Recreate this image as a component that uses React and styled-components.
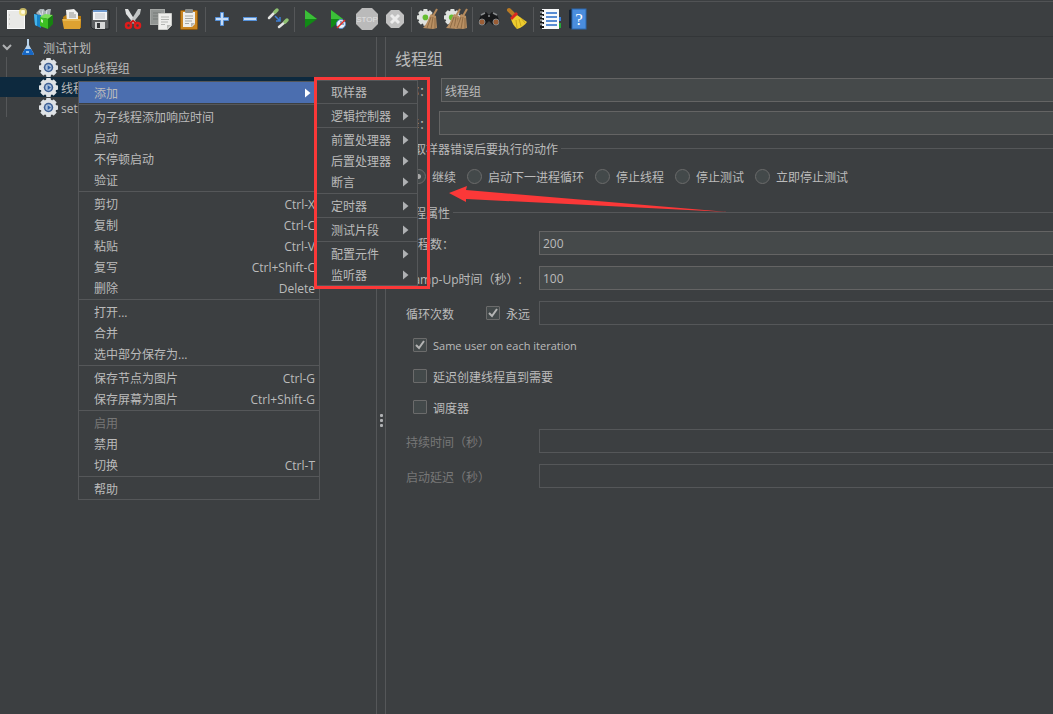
import styled, { createGlobalStyle } from "styled-components";

const GlobalStyle = createGlobalStyle`
    * {
        box-sizing: border-box;
    }
    body {
        margin: 0;
        background-color: #3c3f41;
        color: #bbbbbb;
        font-family: "Open Sans", "Noto Sans CJK SC", sans-serif;
        font-size: 12px;
        line-height: 20px;
    }
    button, input {
        font: inherit;
        color: inherit;
    }
`;

const Window = styled.div`
    position: relative;
    display: flex;
    flex-direction: column;
    min-height: 100vh;
    overflow: hidden;
`;

const Text = styled.span`
    padding-top: ${({ $menu }) => ($menu ? 2 : 4)}px;
    font-size: ${({ $small }) => ($small ? 11 : 12)}px;
    white-space: nowrap;
`;

const StyledToolbar = styled.div`
    display: flex;
    align-items: center;
    height: 36px;
    margin-top: 1px;
    padding-left: 2px;
    border-top: 1px solid #515355;
    border-bottom: 1px solid #333638;
`;

const ToolButton = styled.button`
    display: flex;
    align-items: center;
    justify-content: center;
    width: 28px;
    height: 28px;
    padding: 0;
    border: none;
    background: transparent;
    svg {
        flex: none;
    }
`;

const ToolDivider = styled.div`
    width: 1px;
    height: 25px;
    margin: 0 2px;
    background-color: #555759;
`;

const Body = styled.div`
    display: flex;
    flex: 1;
`;

const Sidebar = styled.div`
    width: 377px;
    flex: none;
    border-right: 1px solid #555759;
`;

const Splitter = styled.div`
    display: flex;
    flex-direction: column;
    align-items: center;
    justify-content: center;
    gap: 2px;
    width: 9px;
    flex: none;
    padding-top: 90px;
    border-right: 1px solid #555759;
    span {
        width: 3px;
        height: 3px;
        border-radius: 1px;
        background-color: #afb1b3;
    }
`;

const Tree = styled.ul`
    list-style: none;
    margin: 0;
    padding: 0;
`;

const Branch = styled(Tree)`
    background: linear-gradient(#555759, #555759) 6px 0 / 1px 100% no-repeat;
`;

const TreeRow = styled.div`
    display: flex;
    align-items: center;
    height: 20px;
    padding-left: ${({ $level }) => ($level ? 39 : 1)}px;
    gap: ${({ $level }) => ($level ? 3 : 9)}px;
    background-color: ${({ $selected }) => ($selected ? "#0d293e" : "transparent")};
    svg {
        flex: none;
    }
`;

const Panel = styled.main`
    flex: 1;
    min-width: 0;
    padding: 10px 0 0 9px;
`;

const Title = styled.h1`
    margin: 0 0 7px;
    font-size: 16px;
    font-weight: 400;
    line-height: 24px;
`;

const Field = styled.div`
    display: flex;
    align-items: center;
    height: 24px;
    margin-bottom: ${({ $gap }) => $gap || 11}px;
    color: ${({ $disabled }) => ($disabled ? "#777777" : "inherit")};
`;

const FieldLabel = styled.label`
    display: flex;
    flex: none;
    width: ${({ $width }) => $width || 133}px;
`;

const TextInput = styled.input`
    flex: 1;
    min-width: 0;
    height: 24px;
    padding: ${({ $numeric }) => ($numeric ? 0 : 2)}px 3px 0;
    border: 1px solid #646464;
    border-right: none;
    background-color: #45494a;
    outline: none;
    &:disabled {
        border-color: #555759;
        background-color: #3c3f41;
    }
`;

const Group = styled.fieldset`
    min-width: 0;
    margin: 0;
    padding: 0 0 0 11px;
    border: none;
`;

const Legend = styled.legend`
    display: flex;
    align-items: center;
    gap: 3px;
    width: calc(100% + 4px);
    height: 20px;
    margin-left: -4px;
    padding: 0;
    &::after {
        content: "";
        flex: 1;
        height: 1px;
        background-color: #555759;
    }
`;

const RadioRow = styled.div`
    display: flex;
    flex-wrap: wrap;
    gap: 11px;
    padding: 8px 0 16px 5px;
`;

const ThreadFields = styled.div`
    padding-top: 9px;
`;

const Choice = styled.label`
    display: flex;
    align-items: center;
    gap: 6px;
    height: 20px;
`;

const Radio = styled.input`
    appearance: none;
    width: 15px;
    height: 15px;
    margin: 0;
    border: 1px solid #6b6b6b;
    border-radius: 50%;
    background-color: #43494a;
    &:checked {
        background-image: radial-gradient(circle, #a8a8a8 2px, transparent 3px);
    }
`;

const Check = styled.span`
    display: grid;
    width: 14px;
    height: 14px;
    flex: none;
    input {
        grid-area: 1 / 1;
        appearance: none;
        width: 14px;
        height: 14px;
        margin: 0;
        border: 1px solid #6b6b6b;
        border-radius: 1px;
        background-color: #43494a;
    }
    svg {
        grid-area: 1 / 1;
        pointer-events: none;
        visibility: hidden;
    }
    input:checked + svg {
        visibility: visible;
    }
`;

const LoopChoice = styled(Choice)`
    width: 53px;
    flex: none;
`;

const CheckList = styled.div`
    display: flex;
    flex-direction: column;
    gap: 11px;
    padding: 0 0 12px 7px;
`;

const Menu = styled.ul`
    position: absolute;
    left: ${({ $x }) => $x}px;
    top: ${({ $y }) => $y}px;
    width: ${({ $width }) => $width}px;
    margin: 0;
    padding: 0;
    list-style: none;
    border: 1px solid #555759;
    background-color: #3c3f41;
    color: #bbbbbb;
    z-index: 1;
`;

const MenuItem = styled.li`
    position: relative;
`;

const MenuButton = styled.button`
    display: flex;
    align-items: center;
    justify-content: space-between;
    width: 100%;
    height: 21px;
    padding: 0 4px 0 15px;
    border: none;
    background-color: ${({ $active }) => ($active ? "#4b6eaf" : "transparent")};
    text-align: left;
    &:disabled {
        color: #777777;
    }
    svg {
        margin-right: 4px;
    }
`;

const MenuDivider = styled.li`
    height: 1px;
    margin: 1px 0;
    background-color: #555759;
`;

const Highlight = styled.div`
    position: absolute;
    left: 314px;
    top: 77px;
    width: 116px;
    height: 212px;
    border: 3px solid #fb3838;
    pointer-events: none;
    z-index: 2;
`;

const Pointer = styled.svg`
    position: absolute;
    left: 448px;
    top: 184px;
    pointer-events: none;
`;

function Icon({ children, size = 24 }) {
    return (
        <svg width={size} height={size} viewBox="0 0 24 24" aria-hidden="true">
            {children}
        </svg>
    );
}

const NewIcon = () => (
    <Icon>
        <rect x="3.5" y="3.5" width="17" height="18" fill="#e9e9e7" stroke="#fbfbfb" />
        <path d="M5 8h1M5 12h1M5 17h1" stroke="#b5b5b1" />
        <circle cx="19" cy="5" r="4" fill="#f0dd72" opacity=".75" />
        <circle cx="19" cy="5" r="2" fill="#fffbe0" />
    </Icon>
);

const TemplatesIcon = () => (
    <Icon>
        <path d="M4 6l4-4h4l1 2 3-2h3l-1 6-8 4z" fill="#a9b2b6" />
        <path d="M7 4l2 4M11 3l-1 5M15 3l-1 5" stroke="#d9dfe1" />
        <path d="M2 7l7 1v13l-6-3z" fill="#1583c8" />
        <path d="M2 7l3 1v11l-2-1z" fill="#46b4ea" />
        <path d="M8 10l5-3 8 1-5 4z" fill="#7be05a" />
        <path d="M8 10l8 2v10l-8-3z" fill="#3cc023" />
        <path d="M21 8l-5 4v10l5-5z" fill="#178210" />
        <path d="M9 12l2 1v3l-2-1z" fill="#c8f5b8" />
    </Icon>
);

const OpenIcon = () => (
    <Icon>
        <path d="M3 10l3-2h3l12 1v12H4z" fill="#b97c10" />
        <path d="M6 3l8-1 4 4v9H7z" fill="#f1f1ef" />
        <path d="M9 6h5M9 8h7M9 10h7" stroke="#92928e" />
        <path d="M2 12h19l-1 10H4z" fill="#dda231" />
        <path d="M3 13h17" stroke="#f3cd74" />
    </Icon>
);

const SaveIcon = () => (
    <Icon>
        <path d="M3 3h18v19H5l-2-2z" fill="#5b5e60" stroke="#25282a" />
        <rect x="5" y="3" width="14" height="10" fill="#f3f5f8" />
        <path d="M5 3h14v2H5z" fill="#6e9ad0" />
        <path d="M7 7h10M7 9h10M7 11h10" stroke="#bcc2ca" />
        <rect x="7" y="15" width="10" height="7" fill="#d5d7d7" />
        <rect x="9" y="16" width="3" height="5" fill="#35383a" />
    </Icon>
);

const CutIcon = () => (
    <Icon>
        <path d="M4 2l3 0 8 13-2 2L5 7z" fill="#dfe1e1" />
        <path d="M20 2l-3 0L9 15l2 2 8-10z" fill="#c2c5c5" />
        <circle cx="7.5" cy="18.5" r="2.5" fill="none" stroke="#df1b1b" strokeWidth="2.5" />
        <circle cx="16.5" cy="18.5" r="2.5" fill="none" stroke="#df1b1b" strokeWidth="2.5" />
        <path d="M9 16l3-2 3 2" fill="none" stroke="#c81414" strokeWidth="2" />
    </Icon>
);

const CopyIcon = () => (
    <Icon>
        <rect x="1.5" y="2.5" width="14" height="15" fill="#929694" stroke="#a5a8a6" />
        <path d="M4 6h8M4 9h6M4 12h6" stroke="#777b79" />
        <path d="M9.5 6.5h13v12l-4 4h-9z" fill="#eeeeec" stroke="#c9cac7" />
        <path d="M12 10h8M12 12.5h8M12 15h7M12 17.5h4" stroke="#b3b5b2" />
        <path d="M22 18h-4v4z" fill="#b6b8b5" />
    </Icon>
);

const PasteIcon = () => (
    <Icon>
        <rect x="3.5" y="3.5" width="17" height="19" rx="1" fill="#c98420" stroke="#8b570d" />
        <path d="M6 5h12v12l-3 3H6z" fill="#eeeeec" />
        <rect x="8" y="2" width="8" height="4" rx="1" fill="#8b8e8c" />
        <path d="M8 9h8M8 11.5h8M8 14h7M8 16.5h4" stroke="#a5a7a4" />
        <path d="M18 16h-4v4z" fill="#b3b5b2" />
    </Icon>
);

const PlusIcon = () => (
    <Icon>
        <path d="M10.5 5.5h3v5h5v3h-5v5h-3v-5h-5v-3h5z" fill="#c5dcf7" stroke="#5590d8" />
    </Icon>
);

const MinusIcon = () => (
    <Icon>
        <rect x="5.5" y="10.5" width="13" height="3" fill="#c5dcf7" stroke="#5590d8" />
    </Icon>
);

const ToggleIcon = () => (
    <Icon>
        <path d="M3 11l6-6" stroke="#e3e5e1" strokeWidth="2.5" strokeLinecap="round" />
        <path d="M9 5l2-2" stroke="#8fc272" strokeWidth="3.5" strokeLinecap="round" />
        <path d="M13 20l6-5" stroke="#e3e5e1" strokeWidth="2.5" strokeLinecap="round" />
        <path d="M19 15l2-2" stroke="#8fc272" strokeWidth="3.5" strokeLinecap="round" />
        <path d="M9 9l5 5M14 10v4h-4" fill="none" stroke="#3d7fd5" strokeWidth="1.5" />
    </Icon>
);

const StartIcon = () => (
    <Icon>
        <path d="M6 3l12 9-12 9z" fill="#118a15" />
        <path d="M6 3l12 9H6z" fill="#3bbf38" />
    </Icon>
);

const StartNoPauseIcon = () => (
    <Icon>
        <path d="M4 3l12 9-12 9z" fill="#118a15" />
        <path d="M4 3l12 9H4z" fill="#3bbf38" />
        <circle cx="14" cy="17" r="4.5" fill="#e9f0fa" stroke="#5c8dc8" />
        <path d="M14 14v3h3" fill="none" stroke="#345d94" />
        <path d="M10 21l8-8" stroke="#e42b1f" strokeWidth="1.5" />
    </Icon>
);

const StopIcon = () => (
    <Icon>
        <path d="M7 1h10l6 6v10l-6 6H7l-6-6V7z" fill="#bababa" />
        <text x="12" y="15" textAnchor="middle" fontSize="8" fontFamily="Liberation Sans" fill="#e2e2e2">STOP</text>
    </Icon>
);

const ShutdownIcon = () => (
    <Icon>
        <path d="M8 3h8l5 5v8l-5 5H8l-5-5V8z" fill="#c1c1c1" />
        <path d="M8 8l8 8M16 8l-8 8" stroke="#ececec" strokeWidth="3" />
    </Icon>
);

function Cog({ color }) {
    return (
        <g fill={color}>
            <circle cx="12" cy="12" r="10" />
            {[0, 45, 90, 135].map((angle) => (
                <rect key={angle} x="9" y="0" width="6" height="24" rx="1" transform={`rotate(${angle} 12 12)`} />
            ))}
        </g>
    );
}

function Broom() {
    return (
        <g>
            <path d="M21 2l-4 7" stroke="#b58a5c" strokeWidth="2" />
            <path d="M15 7l5 2 1 12-4 1-10-1c4-4 5-9 8-14z" fill="#b88f63" />
            <path d="M15 10l-4 11M17 10l-2 12M19 11v10" stroke="#8f6b45" />
        </g>
    );
}

const ClearIcon = () => (
    <Icon>
        <g transform="translate(1 2) scale(.7)">
            <Cog color="#dfe2df" />
            <circle cx="12" cy="12" r="4" fill="#65bd30" />
        </g>
        <Broom />
    </Icon>
);

const ClearAllIcon = () => (
    <Icon>
        <g transform="translate(0 2) scale(.7)">
            <Cog color="#dfe2df" />
            <circle cx="11" cy="12" r="4" fill="#65bd30" />
        </g>
        <g transform="translate(-5 0)"><Broom /></g>
        <g transform="translate(2 0)"><Broom /></g>
    </Icon>
);

const SearchIcon = () => (
    <Icon>
        <path d="M4 8l5-3 3 3 3-3 5 3 3 7-3 3h-4l-4-4-4 4H4l-3-3z" fill="#171819" />
        <path d="M4 8l4-2M20 8l-4-2M11 9h2" stroke="#888b8d" strokeWidth="1.5" />
        <circle cx="5" cy="15" r="3" fill="#9b5d35" stroke="#828587" />
        <circle cx="19" cy="15" r="3" fill="#9b5d35" stroke="#828587" />
    </Icon>
);

const ResetIcon = () => (
    <Icon>
        <path d="M4 3l5 5" stroke="#b97a24" strokeWidth="4" strokeLinecap="round" />
        <path d="M12 8l10 7c-2 3-6 6-10 7C9 19 7 16 6 12z" fill="#edcc2e" />
        <path d="M11 13l1 8M14 12l2 7M16 11l4 5" stroke="#c9a51c" />
        <path d="M11 5l2 2-6 6-2-2z" fill="#d92720" />
    </Icon>
);

const FunctionIcon = () => (
    <Icon>
        <path d="M20 10h3v4h-3z" fill="#3b80dc" />
        <path d="M20 16h3v5h-3z" fill="#25a838" />
        <rect x="4" y="2" width="17" height="20" fill="#f8f9fa" />
        <path d="M8 6h11M8 10h11M8 14h11M8 18h11" stroke="#2468c5" strokeWidth="1.5" />
        <path d="M2 4h4M2 8h4M2 12h4M2 16h4M2 20h4" stroke="#171819" strokeWidth="2" />
        <path d="M2 5h3M2 9h3M2 13h3M2 17h3" stroke="#d7d9da" />
    </Icon>
);

const HelpIcon = () => (
    <Icon>
        <path d="M3 3l3-1v20l-3-1z" fill="#14202e" />
        <rect x="6" y="2" width="14" height="20" fill="#4a8ddd" stroke="#2d68ae" />
        <text x="13" y="18" textAnchor="middle" fontSize="17" fontFamily="Liberation Serif" fill="#ffffff">?</text>
    </Icon>
);

const GearIcon = () => (
    <Icon size={19}>
        <Cog color="#dfe3e6" />
        <circle cx="12" cy="12" r="6" fill="#3d5f94" />
        <circle cx="12" cy="12" r="4" fill="#a9c0dc" />
        <path d="M11 9l4 3-4 3z" fill="#2f5fa3" />
    </Icon>
);

const FlaskIcon = () => (
    <svg width="12" height="18" viewBox="0 0 12 18" aria-hidden="true">
        <path d="M5 1h2v6l5 9-1 1H1l-1-1 5-9z" fill="#b9d3ea" />
        <path d="M3 11h6l3 5-1 1H1l-1-1z" fill="#1767c4" />
        <path d="M4 13h3v2H4z" fill="#8fc3f5" />
    </svg>
);

const ArrowIcon = ({ color }) => (
    <svg width="6" height="10" viewBox="0 0 6 10" aria-hidden="true">
        <path d="M0 0.5L5.5 5L0 9.5z" fill={color} />
    </svg>
);

const tools = [
    [["新建", NewIcon], ["模板", TemplatesIcon], ["打开", OpenIcon], ["保存", SaveIcon]],
    [["剪切", CutIcon], ["复制", CopyIcon], ["粘贴", PasteIcon]],
    [["展开", PlusIcon], ["折叠", MinusIcon], ["切换", ToggleIcon]],
    [["启动", StartIcon], ["不停顿启动", StartNoPauseIcon], ["停止", StopIcon], ["关闭", ShutdownIcon]],
    [["清除", ClearIcon], ["清除全部", ClearAllIcon]],
    [["搜索", SearchIcon], ["重置搜索", ResetIcon]],
    [["函数助手", FunctionIcon], ["帮助", HelpIcon]],
];

const menu = [
    [{ label: "添加", sub: true }],
    [{ label: "为子线程添加响应时间" }, { label: "启动" }, { label: "不停顿启动" }, { label: "验证" }],
    [
        { label: "剪切", keys: "Ctrl-X" },
        { label: "复制", keys: "Ctrl-C" },
        { label: "粘贴", keys: "Ctrl-V" },
        { label: "复写", keys: "Ctrl+Shift-C" },
        { label: "删除", keys: "Delete" },
    ],
    [{ label: "打开..." }, { label: "合并" }, { label: "选中部分保存为..." }],
    [{ label: "保存节点为图片", keys: "Ctrl-G" }, { label: "保存屏幕为图片", keys: "Ctrl+Shift-G" }],
    [{ label: "启用", disabled: true }, { label: "禁用" }, { label: "切换", keys: "Ctrl-T" }],
    [{ label: "帮助" }],
];

const addMenu = [
    ["取样器"],
    ["逻辑控制器"],
    ["前置处理器", "后置处理器", "断言"],
    ["定时器"],
    ["测试片段"],
    ["配置元件", "监听器"],
];

const errorActions = ["继续", "启动下一进程循环", "停止线程", "停止测试", "立即停止测试"];

function Toolbar() {
    return (
        <StyledToolbar>
            {tools.flatMap((group, i) => [
                i > 0 && <ToolDivider key={i} />,
                ...group.map(([name, Glyph]) => (
                    <ToolButton key={i + name} type="button" aria-label={name}>
                        <Glyph />
                    </ToolButton>
                )),
            ])}
        </StyledToolbar>
    );
}

function TestTree() {
    return (
        <Tree>
            <li>
                <TreeRow>
                    <svg width="12" height="12" viewBox="0 0 12 12" aria-hidden="true">
                        <path d="M2 4l4 4 4-4" fill="none" stroke="#afb1b3" strokeWidth="2" />
                    </svg>
                    <FlaskIcon />
                    <Text>测试计划</Text>
                </TreeRow>
                <Branch>
                    <li><TreeRow $level={1}><GearIcon /><Text>setUp线程组</Text></TreeRow></li>
                    <li><TreeRow $level={1} $selected><GearIcon /><Text>线程组</Text></TreeRow></li>
                    <li><TreeRow $level={1}><GearIcon /><Text>setUp线程组</Text></TreeRow></li>
                </Branch>
            </li>
        </Tree>
    );
}

function Checkbox(props) {
    return (
        <Check>
            <input type="checkbox" {...props} />
            <svg width="14" height="14" viewBox="0 0 14 14" aria-hidden="true">
                <path d="M3 7l3 3 5-7" fill="none" stroke="#b4b4b4" strokeWidth="2" />
            </svg>
        </Check>
    );
}

function ThreadGroup() {
    return (
        <Panel>
            <Title>线程组</Title>
            <Field $gap={9}>
                <FieldLabel htmlFor="name" $width={46}><Text>名称：</Text></FieldLabel>
                <TextInput id="name" defaultValue="线程组" />
            </Field>
            <Field $gap={3}>
                <FieldLabel htmlFor="comment" $width={44}><Text>注释：</Text></FieldLabel>
                <TextInput id="comment" />
            </Field>
            <Group>
                <Legend><Text>在取样器错误后要执行的动作</Text></Legend>
                <RadioRow>
                    {errorActions.map((action, i) => (
                        <Choice key={action}>
                            <Radio type="radio" name="action" defaultChecked={i === 0} />
                            <Text>{action}</Text>
                        </Choice>
                    ))}
                </RadioRow>
            </Group>
            <Group>
                <Legend><Text>线程属性</Text></Legend>
                <ThreadFields>
                    <Field>
                        <FieldLabel htmlFor="threads"><Text>线程数：</Text></FieldLabel>
                        <TextInput id="threads" $numeric defaultValue="200" />
                    </Field>
                    <Field>
                        <FieldLabel htmlFor="ramp"><Text>Ramp-Up时间（秒）:</Text></FieldLabel>
                        <TextInput id="ramp" $numeric defaultValue="100" />
                    </Field>
                    <Field $gap={10}>
                        <FieldLabel htmlFor="loops" $width={80}><Text>循环次数</Text></FieldLabel>
                        <LoopChoice>
                            <Checkbox defaultChecked />
                            <Text>永远</Text>
                        </LoopChoice>
                        <TextInput id="loops" disabled />
                    </Field>
                </ThreadFields>
                <CheckList>
                    <Choice><Checkbox defaultChecked /><Text $menu $small>Same user on each iteration</Text></Choice>
                    <Choice><Checkbox /><Text>延迟创建线程直到需要</Text></Choice>
                    <Choice><Checkbox /><Text>调度器</Text></Choice>
                </CheckList>
                <Field $disabled>
                    <FieldLabel htmlFor="duration"><Text>持续时间（秒）</Text></FieldLabel>
                    <TextInput id="duration" disabled />
                </Field>
                <Field $disabled>
                    <FieldLabel htmlFor="delay"><Text>启动延迟（秒）</Text></FieldLabel>
                    <TextInput id="delay" disabled />
                </Field>
            </Group>
        </Panel>
    );
}

function AddMenu() {
    return (
        <Menu $x={236} $y={-2} $width={103}>
            {addMenu.flatMap((group, i) => [
                i > 0 && <MenuDivider key={i} />,
                ...group.map((label) => (
                    <MenuItem key={label}>
                        <MenuButton type="button">
                            <Text $menu>{label}</Text>
                            <ArrowIcon color="#afb1b3" />
                        </MenuButton>
                    </MenuItem>
                )),
            ])}
        </Menu>
    );
}

function ContextMenu() {
    return (
        <Menu $x={78} $y={81} $width={242}>
            {menu.flatMap((group, i) => [
                i > 0 && <MenuDivider key={i} />,
                ...group.map(({ label, keys, sub, disabled }) => (
                    <MenuItem key={label}>
                        <MenuButton type="button" $active={sub} disabled={disabled}>
                            <Text $menu>{label}</Text>
                            {keys && <Text $menu>{keys}</Text>}
                            {sub && <ArrowIcon color="#ffffff" />}
                        </MenuButton>
                        {sub && <AddMenu />}
                    </MenuItem>
                )),
            ])}
        </Menu>
    );
}

export default function App() {
    return (
        <>
            <GlobalStyle />
            <Window>
                <Toolbar />
                <Body>
                    <Sidebar>
                        <TestTree />
                    </Sidebar>
                    <Splitter>
                        <span />
                        <span />
                        <span />
                    </Splitter>
                    <ThreadGroup />
                </Body>
                <ContextMenu />
                <Highlight />
                <Pointer width="282" height="30" viewBox="0 0 282 30" aria-hidden="true">
                    <path d="M1 9L19 2L18 6L280 28L18 15L18 18z" fill="#fb3838" />
                </Pointer>
            </Window>
        </>
    );
}
